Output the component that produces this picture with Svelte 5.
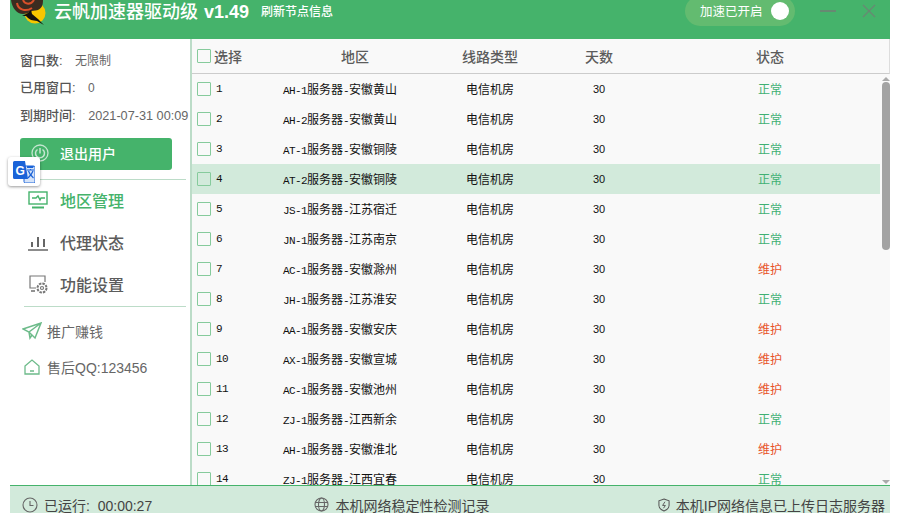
<script lang="ts">
    const rows = [
        ["AH-1", "安徽黄山", "正常"],
        ["AH-2", "安徽黄山", "正常"],
        ["AT-1", "安徽铜陵", "正常"],
        ["AT-2", "安徽铜陵", "正常"],
        ["JS-1", "江苏宿迁", "正常"],
        ["JN-1", "江苏南京", "正常"],
        ["AC-1", "安徽滁州", "维护"],
        ["JH-1", "江苏淮安", "正常"],
        ["AA-1", "安徽安庆", "维护"],
        ["AX-1", "安徽宣城", "维护"],
        ["AC-1", "安徽池州", "维护"],
        ["ZJ-1", "江西新余", "正常"],
        ["AH-1", "安徽淮北", "维护"],
        ["ZJ-1", "江西宜春", "正常"],
    ];
    const selected = 4;
</script>

<div class="window">
    <header class="topbar">
        <svg class="logo" width="36" height="26" viewBox="0 0 36 26">
            <circle cx="25" cy="13" r="10.500" fill="#f7c600"/>
            <path d="M1 0h32c0 5-1 8-5 10-3 1-5 0-8 2-2 1-4 2-7 2C7 14 2 8 1 0z" fill="#3b2c20"/>
            <path d="M13 0c2 5 8 5 11 0M7 3c1 7 9 9 15 5" fill="none" stroke="#d9502a" stroke-width="2"/>
            <path d="M12 16l6-3 3-3 1 4 6 5 6 6-7-4-6-1-3-2-2-2z" fill="#15120e"/>
        </svg>
        <h1>云帆加速器驱动级 <b>v1.49</b></h1>
        <span class="refresh">刷新节点信息</span>
        <div class="toggle">
            <span>加速已开启</span>
            <i class="knob"></i>
        </div>
        <div class="winbtn">
            <svg width="16" height="14" viewBox="0 0 16 14"><path d="M0 7h16" stroke="#678a72" stroke-width="2"/></svg>
            <svg width="14" height="14" viewBox="0 0 14 14"><path d="M1 1l12 12M13 1L1 13" stroke="#678a72" stroke-width="1.400"/></svg>
        </div>
    </header>

    <div class="body">
        <aside class="side">
            <div class="info">
                <p><b>窗口数:</b> <span>无限制</span></p>
                <p><b>已用窗口:</b> <span>0</span></p>
                <p class="expire"><b>到期时间:</b> <span>2021-07-31 00:09</span></p>
            </div>
            <button class="logout">
                <svg width="18" height="18" viewBox="0 0 18 18" fill="none" stroke="#c5e6d0" stroke-width="1.300">
                    <circle cx="9" cy="9" r="8"/>
                    <path d="M6.500 5.500a4.500 4.500 0 1 0 5 0M9 4v5.500" stroke-width="1.500"/>
                </svg>
                退出用户
            </button>
            <hr />
            <nav>
                <div class="nav active">
                    <svg width="22" height="22" viewBox="0 0 22 22" fill="none" stroke="#45b36b" stroke-width="1.400">
                        <rect x="2" y="3" width="18" height="12"/>
                        <path d="M5 9h4l2-2 2 4 1-2h4"/>
                        <path d="M5 18.500h12" stroke-width="2"/>
                    </svg>
                    地区管理
                </div>
                <div class="nav">
                    <svg width="22" height="22" viewBox="0 0 22 22" fill="none" stroke="#666" stroke-width="1.500">
                        <path d="M1 19h20"/>
                        <path d="M5 16v-5M11 16V6M17 16V8" stroke-width="2"/>
                    </svg>
                    代理状态
                </div>
                <div class="nav">
                    <svg width="22" height="22" viewBox="0 0 22 22" fill="none" stroke="#777" stroke-width="1.200">
                        <path d="M9 15H3V3h15v6"/>
                        <path d="M4 18h4" stroke-width="1.600"/>
                        <circle cx="15" cy="15" r="4.500" stroke-dasharray="2.500 1" stroke-width="2"/>
                        <circle cx="15" cy="15" r="1.500"/>
                    </svg>
                    功能设置
                </div>
            </nav>
            <hr />
            <div class="links">
                <div class="link">
                    <svg width="20" height="18" viewBox="0 0 20 18" fill="none" stroke="#6dbb8a" stroke-width="1.500">
                        <path d="M1 7L19 1 13 16 7 10zM19 1L7 10l1 6 2-3"/>
                    </svg>
                    推广赚钱
                </div>
                <div class="link">
                    <svg width="20" height="18" viewBox="0 0 20 18" fill="none" stroke="#6dbb8a" stroke-width="1.300">
                        <path d="M3 8l7-6 7 6v8H3zM8 13h4"/>
                    </svg>
                    售后QQ:123456
                </div>
            </div>
        </aside>

        <main class="table">
            <div class="row head">
                <div class="c-check"><i class="box"></i>选择</div>
                <div class="c-area">地区</div>
                <div class="c-line">线路类型</div>
                <div>天数</div>
                <div>状态</div>
            </div>
            <div class="list">
                {#each rows as r, i}
                    <div class="row item" class:sel={i + 1 === selected}>
                        <div class="c-check"><i class="box"></i><span class="num">{i + 1}</span></div>
                        <div class="c-area"><span class="code">{r[0]}</span>服务器<span class="code">-</span>{r[1]}</div>
                        <div class="c-line">电信机房</div>
                        <div class="c-days">30</div>
                        <div class="c-state" class:bad={r[2] === "维护"}>{r[2]}</div>
                    </div>
                {/each}
            </div>
            <div class="scrollbar">
                <i class="up"></i>
                <i class="thumb"></i>
                <i class="down"></i>
            </div>
        </main>
    </div>

    <footer class="status">
        <div>
            <svg width="16" height="16" viewBox="0 0 16 16" fill="none" stroke="#666" stroke-width="1.100">
                <circle cx="8" cy="8" r="7"/>
                <path d="M8 4v4.500h3.500"/>
            </svg>
            已运行: &nbsp;00:00:27
        </div>
        <div class="mid">
            <svg width="15" height="15" viewBox="0 0 15 15" fill="none" stroke="#666" stroke-width="1.100">
                <circle cx="7.500" cy="7.500" r="6.500"/>
                <ellipse cx="7.500" cy="7.500" rx="3" ry="6.500"/>
                <path d="M1 5.500h13M1 9.500h13"/>
            </svg>
            本机网络稳定性检测记录
        </div>
        <div>
            <svg width="12" height="14" viewBox="0 0 13 15" fill="none" stroke="#555" stroke-width="1.100">
                <path d="M6.500 1l5.500 2v5c0 3-3 5-5.500 6C4 13 1 11 1 8V3z"/>
                <path d="M7.500 4L5 8h3l-2 3" stroke-width="1"/>
            </svg>
            本机IP网络信息已上传日志服务器
        </div>
    </footer>

    <div class="translate">
        <svg width="22" height="22" viewBox="0 0 22 22">
            <rect x="11" y="5" width="11" height="17" rx="1.500" fill="#d5e3f8" stroke="#1a63d8"/>
            <path d="M0 1.500A1.500 1.500 0 0 1 1.500 0H12l3 18H1.500A1.500 1.500 0 0 1 0 16.500z" fill="#1a63d8"/>
            <path d="M14 5h7l-1 2h-6z" fill="#1a63d8"/>
            <path d="M14 9h7M17.500 8v1M15.500 10c1 3 2.500 5 5 7M20 10c-1 3-3 5-5 7" stroke="#1a63d8" stroke-width="1.200" fill="none"/>
            <text x="2.500" y="13.500" font-size="12" font-weight="700" fill="#fff" font-family="Liberation Sans, sans-serif">G</text>
        </svg>
    </div>
</div>

<style>
    :global(body) {
        background: #fff;
        overflow: hidden;
    }

    .window {
        position: relative;
        width: 880px;
        height: 513px;
        margin-left: 10px;
        display: flex;
        flex-direction: column;
        font-family: "Liberation Sans", "Noto Sans CJK SC", sans-serif;
    }

    .topbar {
        flex: none;
        height: 39px;
        background: #45b36b;
        display: flex;
        align-items: flex-start;
        color: #fff;
        overflow: hidden;
    }

    .logo {
        flex: none;
        margin-right: 8px;
    }

    h1 {
        margin: 1px 0 0;
        font-size: 18px;
        line-height: 23px;
        font-weight: 500;
        white-space: nowrap;
    }

    h1 b {
        margin-left: 1px;
    }

    .refresh {
        margin: 3px 0 0 12px;
        font-size: 12px;
        line-height: 18px;
        font-weight: 500;
    }

    .toggle {
        margin: -4px 0 0 auto;
        width: 110px;
        height: 30px;
        border-radius: 15px;
        background: #63bb70;
        display: flex;
        align-items: center;
        justify-content: space-between;
        padding: 0 6px 0 15px;
        box-sizing: border-box;
        font-size: 12.500px;
    }

    .toggle span {
        margin-bottom: 2px;
    }

    .knob {
        width: 18px;
        height: 18px;
        border-radius: 50%;
        background: #fff;
    }

    .winbtn {
        display: flex;
        gap: 26px;
        margin: 4px 14px 0 25px;
    }

    .body {
        flex: 1;
        min-height: 0;
        display: flex;
    }

    .side {
        flex: none;
        width: 180px;
        box-sizing: border-box;
        padding-top: 8.500px;
        color: #666;
        background: #fff;
    }

    .info {
        padding-left: 10px;
    }

    .info p {
        margin: 0;
        height: 27.500px;
        line-height: 26px;
        font-size: 12px;
        white-space: nowrap;
    }

    .info .expire {
        font-size: 12.700px;
    }

    .info b {
        font-size: 13px;
        font-weight: 500;
        color: #555;
        margin-right: 9px;
    }

    .logout {
        display: flex;
        align-items: center;
        gap: 11px;
        width: 152px;
        height: 32px;
        margin: 8px 0 9px 10px;
        padding: 0 0 2px 11px;
        border: none;
        border-radius: 3px;
        background: #45b36b;
        color: #fff;
        font: 500 14px "Noto Sans CJK SC", sans-serif;
    }

    hr {
        margin: 0 0 0 14px;
        width: 162px;
        border: none;
        border-top: 1px solid #bcdcc8;
    }

    .nav {
        height: 42px;
        box-sizing: border-box;
        padding-bottom: 2px;
        display: flex;
        align-items: center;
        gap: 11px;
        padding-left: 17px;
        font-size: 16px;
        font-weight: 500;
        color: #5c5c5c;
    }

    .nav.active {
        color: #45b36b;
    }

    .links {
        padding-top: 6px;
    }

    .link {
        height: 36px;
        display: flex;
        align-items: center;
        gap: 5px;
        padding-left: 12px;
        font-size: 14px;
        color: #666;
    }

    .table {
        position: relative;
        flex: 1;
        min-width: 0;
        background: #f9f9f9;
        border-left: 2px solid #bcdcc8;
        overflow: hidden;
    }

    .row {
        display: grid;
        grid-template-columns: 46px 204px 96px 122px 220px;
        align-items: center;
        text-align: center;
    }

    .head {
        height: 34px;
        border-bottom: 1px solid #ccc;
        border-right: 1px solid #ddd;
        font-size: 14px;
        font-weight: 500;
        color: #5c5c5c;
    }

    .head .c-area {
        padding-left: 30px;
    }

    .c-check {
        display: flex;
        align-items: center;
        padding-left: 5px;
        white-space: nowrap;
    }

    .box {
        flex: none;
        width: 12px;
        height: 12px;
        border: 1px solid #86cb9c;
        border-radius: 1px;
        margin-right: 3px;
    }

    .item {
        height: 30px;
        font-size: 12px;
        color: #111;
    }

    .item .box {
        margin-right: 5px;
    }

    .item.sel {
        background: #d2eadb;
        width: 688px;
    }

    .item .c-area, .item .c-line, .item .c-state {
        margin-bottom: 2px;
    }

    .num, .code {
        font-family: "Liberation Mono", monospace;
        font-size: 11px;
        letter-spacing: -0.600px;
    }

    .c-days {
        font-size: 11px;
    }

    .c-area {
        white-space: nowrap;
    }

    .c-state {
        color: #3fb073;
    }

    .c-state.bad {
        color: #e8542a;
    }

    .scrollbar {
        position: absolute;
        right: 0;
        top: 35px;
        bottom: 0;
        width: 8px;
        display: flex;
        flex-direction: column;
        align-items: center;
    }

    .up {
        margin-top: 3px;
        border: 4px solid transparent;
        border-top: 0;
        border-bottom-color: #aaa;
    }

    .thumb {
        width: 8px;
        height: 168px;
        background: #a3a3a3;
        border-radius: 4px;
        margin-top: 1px;
    }

    .down {
        margin-top: auto;
        margin-bottom: 1px;
        border: 4px solid transparent;
        border-bottom: 0;
        border-top-color: #aaa;
    }

    .status {
        flex: none;
        height: 28px;
        box-sizing: border-box;
        background: #d2eadb;
        border-top: 1px solid #45b36b;
        display: flex;
        align-items: center;
        justify-content: space-between;
        padding: 10px 5px 0 12px;
        font-size: 14px;
        color: #444;
        white-space: nowrap;
        overflow: hidden;
    }

    .status div {
        display: flex;
        align-items: center;
    }

    .status .mid {
        margin-right: 6px;
    }

    .status svg {
        margin-right: 6px;
    }

    .translate {
        position: absolute;
        left: -2px;
        top: 157px;
        width: 32px;
        height: 29px;
        box-sizing: border-box;
        background: #fff;
        border-radius: 3px;
        box-shadow: 0 1px 3px rgba(0, 0, 0, 0.4);
        display: flex;
        align-items: center;
        justify-content: center;
    }
</style>
